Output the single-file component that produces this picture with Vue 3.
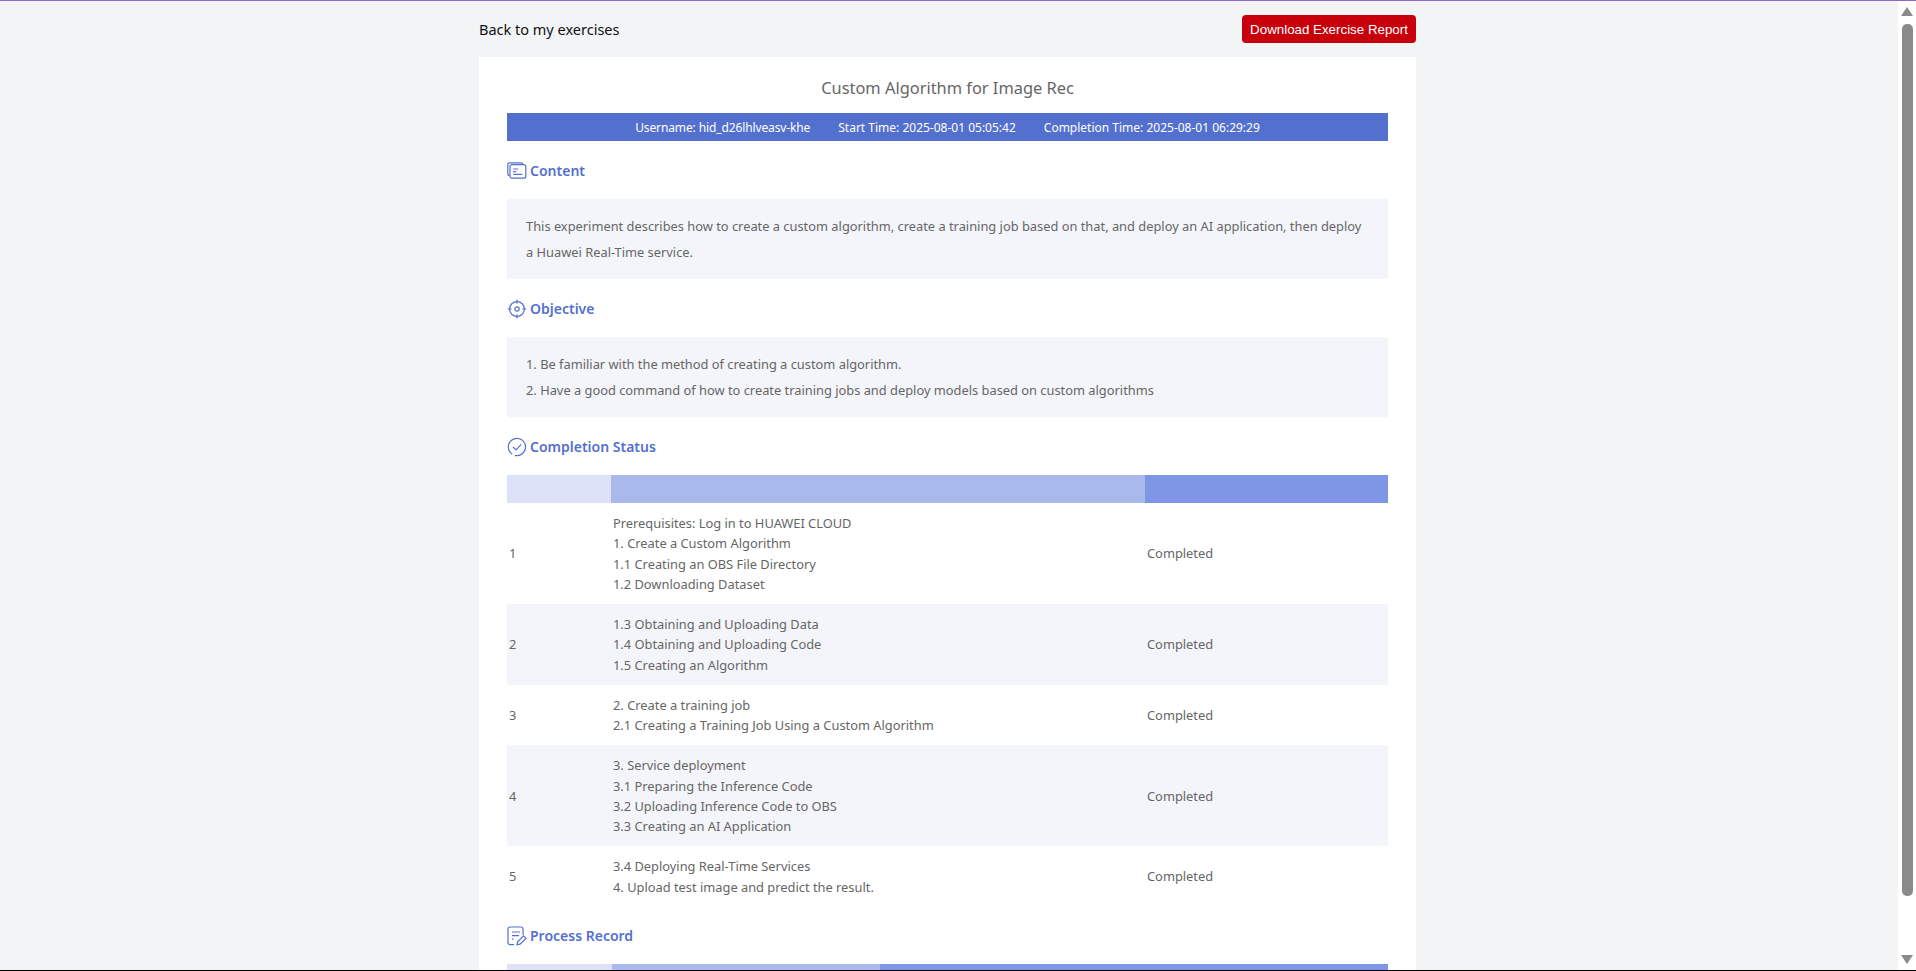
<template>
  <div class="screen">
    <div class="page">
      <div class="wrap">
        <div class="top-row">
          <a class="back-link">Back to my exercises</a>
          <button class="download-btn">Download Exercise Report</button>
        </div>
        <div class="card">
          <h1 class="title">Custom Algorithm for Image Rec</h1>
          <div class="info-bar">
            <span class="user">Username: hid_d26lhlveasv-khe</span>
            <span>Start Time: 2025-08-01 05:05:42</span>
            <span>Completion Time: 2025-08-01 06:29:29</span>
          </div>

          <h2 class="section-head">
            <svg viewBox="0 0 20 20" width="20" height="20" fill="none" stroke="#5470cf" stroke-width="1.2">
              <path d="M3 14.5H2.4A1.6 1.6 0 0 1 .8 12.9V3.4A1.6 1.6 0 0 1 2.4 1.8h11.8c1 0 1.7.6 1.8 1.6" />
              <rect x="3" y="3.6" width="15.8" height="13.6" rx="2" />
              <path d="M6.2 8h5M6.2 10.6h3M6.2 13.4h9" />
            </svg>
            Content
          </h2>
          <div class="text-box">
            <p>This experiment describes how to create a custom algorithm, create a training job based on that, and deploy an AI application, then deploy a Huawei Real-Time service.</p>
          </div>

          <h2 class="section-head">
            <svg viewBox="0 0 20 20" width="20" height="20" fill="none" stroke="#5470cf" stroke-width="1.2">
              <circle cx="10" cy="10" r="7.4" />
              <circle cx="10" cy="10" r="2.2" />
              <path d="M10 .6v4M10 15.4v4M.6 10h4M15.4 10h4" />
            </svg>
            Objective
          </h2>
          <div class="text-box">
            <p>1. Be familiar with the method of creating a custom algorithm.</p>
            <p>2. Have a good command of how to create training jobs and deploy models based on custom algorithms</p>
          </div>

          <h2 class="section-head">
            <svg viewBox="0 0 20 20" width="20" height="20" fill="none" stroke="#5470cf" stroke-width="1.2">
              <path d="M5.2 17.2A8.6 8.6 0 1 1 10 18.6c-.8 0-1.5-.1-2.2-.3" />
              <path d="M6 10l3 3 5.2-5.6" />
            </svg>
            Completion Status
          </h2>
          <div class="status-table">
            <div class="head-row">
              <div class="h1"></div>
              <div class="h2"></div>
              <div class="h3"></div>
            </div>
            <div v-for="(row, i) in rows" :key="i" class="row" :class="{ alt: i % 2 === 1 }">
              <div class="cell">{{ i + 1 }}</div>
              <div class="cell steps">
                <div v-for="s in row" :key="s">{{ s }}</div>
              </div>
              <div class="cell">Completed</div>
            </div>
          </div>

          <h2 class="section-head record">
            <svg viewBox="0 0 20 20" width="20" height="20" fill="none" stroke="#5470cf" stroke-width="1.2">
              <path d="M7 18.6H3A2 2 0 0 1 1 16.6V3A2 2 0 0 1 3 1h11a2 2 0 0 1 2 2v6" />
              <path d="M5 6h8M5 9.6h7M5 13.2h1.6" />
              <path d="M10 18.8l.6-3 6-6 2.4 2.4-6 6z" />
            </svg>
            Process Record
          </h2>
          <div class="head-row record-head">
            <div class="r1"></div>
            <div class="r2"></div>
            <div class="r3"></div>
          </div>
        </div>
      </div>
    </div>
    <div class="scrollbar">
      <span class="arrow up"></span>
      <span class="thumb"></span>
      <span class="arrow down"></span>
    </div>
  </div>
</template>

<script setup>
const rows = [
  ['Prerequisites: Log in to HUAWEI CLOUD', '1. Create a Custom Algorithm', '1.1 Creating an OBS File Directory', '1.2 Downloading Dataset'],
  ['1.3 Obtaining and Uploading Data', '1.4 Obtaining and Uploading Code', '1.5 Creating an Algorithm'],
  ['2. Create a training job', '2.1 Creating a Training Job Using a Custom Algorithm'],
  ['3. Service deployment', '3.1 Preparing the Inference Code', '3.2 Uploading Inference Code to OBS', '3.3 Creating an AI Application'],
  ['3.4 Deploying Real-Time Services', '4. Upload test image and predict the result.']
]
</script>

<style>
html, body {
  margin: 0;
  overflow: hidden;
}
</style>

<style scoped>
.screen {
  display: flex;
  border-top: 1px solid #9068c4;
  border-bottom: 1px solid #000;
  box-sizing: border-box;
  height: 971px;
  overflow: hidden;
  font-family: "Noto Sans", sans-serif;
  background: #f3f4f6;
}

.page {
  flex: 1;
  min-width: 0;
  overflow: hidden;
}

.wrap {
  width: 937px;
  margin-left: 479px;
}

.top-row {
  display: flex;
  align-items: center;
  justify-content: space-between;
  height: 56px;
}

.back-link {
  font-size: 14.5px;
  color: #111;
}

.download-btn {
  width: 174px;
  height: 28px;
  padding: 0;
  border: none;
  border-radius: 4px;
  background: #c7000b;
  color: #fff;
  font-family: "Liberation Sans", sans-serif;
  font-size: 13.33px;
}

.card {
  background: #fff;
  padding: 0 28px 40px;
}

.title {
  margin: 0;
  padding: 20px 0 15px;
  font-size: 16.4px;
  line-height: 21px;
  font-weight: 400;
  text-align: center;
  color: #666;
}

.info-bar {
  display: flex;
  justify-content: center;
  gap: 28px;
  height: 28px;
  align-items: center;
  background: #5470cf;
  color: #fff;
  font-size: 12px;
}

.user {
  letter-spacing: -0.12px;
}

.section-head {
  display: flex;
  align-items: center;
  gap: 3px;
  margin: 0;
  padding: 19px 0 17px;
  font-size: 14px;
  line-height: 22px;
  font-weight: 600;
  color: #5470cf;
}

.section-head.record {
  padding-top: 18px;
}

.section-head svg {
  flex: none;
}

.text-box {
  padding: 14px 19px;
  background: #f4f5fa;
  font-size: 12.85px;
  line-height: 26px;
  color: #666;
}

.text-box p {
  margin: 0;
}

.head-row {
  display: flex;
  height: 28px;
}

.h1 {
  width: 104px;
  background: #dde2f8;
}

.h2 {
  width: 534px;
  background: #a9b9ec;
}

.h3 {
  flex: 1;
  background: #7f96e6;
}

.row {
  display: flex;
  align-items: center;
  padding: 10px 0;
  font-size: 12.85px;
  line-height: 20.25px;
  color: #666;
}

.row.alt {
  background: #f4f5fa;
}

.cell {
  box-sizing: border-box;
  padding-left: 2px;
  width: 104px;
}

.cell.steps {
  width: 534px;
}

.r1 {
  width: 105px;
  background: #dde2f8;
}

.r2 {
  width: 268px;
  background: #a9b9ec;
}

.r3 {
  flex: 1;
  background: #7f96e6;
}

.scrollbar {
  display: flex;
  flex-direction: column;
  align-items: center;
  width: 18px;
  background: #fff;
  flex: none;
}

.arrow {
  width: 0;
  height: 0;
  border-left: 6px solid transparent;
  border-right: 6px solid transparent;
}

.arrow.up {
  margin-top: 6px;
  border-bottom: 9px solid #8a8a8a;
}

.arrow.down {
  margin-top: auto;
  margin-bottom: 6px;
  border-top: 9px solid #8a8a8a;
}

.thumb {
  width: 11px;
  height: 872px;
  margin-top: 8px;
  background: #8a8a8a;
  border-radius: 5px;
}
</style>
